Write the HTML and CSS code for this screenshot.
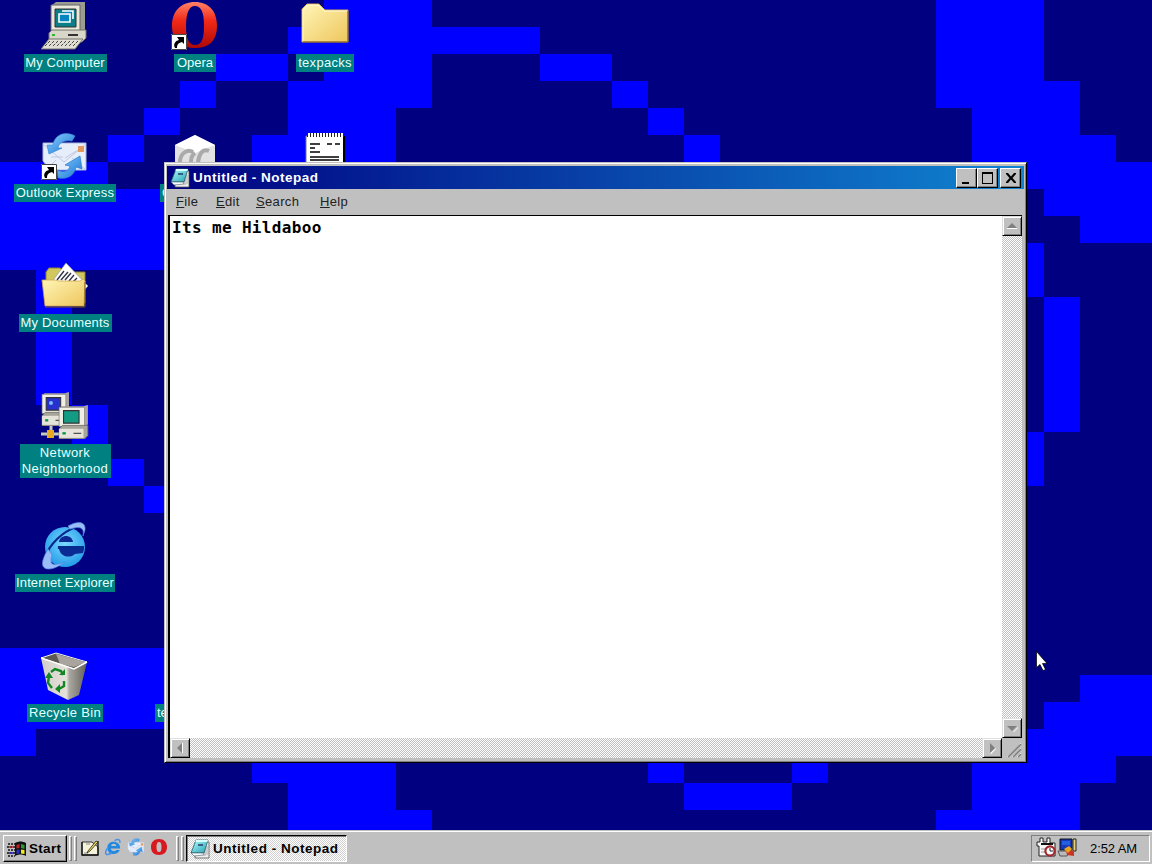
FILE: index.html
```html
<!DOCTYPE html>
<html lang="en">
<head>
<meta charset="utf-8">
<title>Desktop</title>
<link rel="stylesheet" href="styles.css">
</head>
<body>
<svg width="0" height="0" class="defs">
  <defs>
    <linearGradient id="folder" x1="0" y1="0" x2="1" y2="1"><stop offset="0" stop-color="#fff6b8"/><stop offset="1" stop-color="#eec65c"/></linearGradient>
    <linearGradient id="red" x1="0" y1="0" x2="0" y2="1"><stop offset="0" stop-color="#ff8268"/><stop offset=".4" stop-color="#f22a18"/><stop offset="1" stop-color="#ae0804"/></linearGradient>
    <linearGradient id="sky" x1="0" y1="0" x2="1" y2="1"><stop offset="0" stop-color="#8bd0fc"/><stop offset="1" stop-color="#1672d4"/></linearGradient>
    <radialGradient id="ball" cx=".5" cy=".4" r=".6"><stop offset="0" stop-color="#7cd8ff"/><stop offset="1" stop-color="#249ce8"/></radialGradient>
    <linearGradient id="bin" x1="0" y1="0" x2="1" y2="0"><stop offset="0" stop-color="#d0cec6"/><stop offset=".55" stop-color="#e5e2dc"/><stop offset=".62" stop-color="#a9a69f"/><stop offset="1" stop-color="#625f58"/></linearGradient>
    <linearGradient id="teal" x1="0" y1="0" x2="1" y2="1"><stop offset="0" stop-color="#b8ffff"/><stop offset="1" stop-color="#20a0b0"/></linearGradient>
    <symbol id="shortcut" viewBox="0 0 16 16"><path d="M0 0h16v16H0z" fill="#fff"/><path d="M.5.5h15v15H.5z" fill="none" stroke="#444"/><path d="M4 14c-2-4 0-7 4-8L6 3h7v7l-2-2c-4 1-5 3-5 6z" fill="#000"/></symbol>
    <symbol id="note" viewBox="0 0 20 20"><path d="M15 2l4 1v16H5v-3z" fill="#eee" stroke="#555" stroke-width=".8"/><path d="M17 7v9m-2-6v7" stroke="#aaa"/><path d="M6 1h12l-4 13H1z" fill="url(#teal)" stroke="#245764" stroke-width=".8"/><path d="M6 1h12l-.6 2h-12z" fill="#d8ffff"/><path d="M8 6h5" stroke="#125" stroke-width="1.3"/><path d="M1 14h12l1 2-10 1z" fill="#f8ffff" stroke="#456" stroke-width=".6"/></symbol>
    <symbol id="ie" viewBox="0 0 48 48"><ellipse cx="24" cy="25" rx="20" ry="20" fill="url(#ball)"/><path d="M18 20c1-8 13-8 14 0zM18 27h25l-1 4-8 1c-4 4-14 4-16-5z" fill="#0b2a94"/><path d="M43 26H18v-1h25M4 35C9 22 21 10 35 5" fill="none" stroke="#062a8e" stroke-width="2.200"/><path d="M27 4c11-6 18-4 17 4l-2 6c2-9-4-10-13-7M7 27C0 39-1 47 8 47c5 0 10-3 16-7-8 3-14 4-14-1 0-2 0-4 1-6z" fill="#9bbdf7" stroke="#5387e2" stroke-width=".7"/></symbol>
    <symbol id="mail" viewBox="0 0 48 48"><path d="M2 11h43v27H9L2 29z" fill="#e6eefb" stroke="#a6b9e2"/><path d="M2 12l21 18 22-18M15 28L6 37m25-11 13 11M24 26l13-8M10 25h12" fill="none" stroke="#c2c8de" stroke-width="1"/><path d="M37 14h6v6h-6z" fill="#e3985c"/><path d="M34 4C23-2 13 4 12 13H6l2 9 13-6h-4c1-6 7-8 14-7z" fill="url(#sky)" stroke="#3a8bdc" stroke-width=".7"/><path d="M17 46c11 2 17-4 18-11l6 2-2-13-15 9 5 1c-1 5-6 7-13 4z" fill="url(#sky)" stroke="#2678d2" stroke-width=".7"/></symbol>
    <symbol id="pc" viewBox="2 0 28 30" preserveAspectRatio="none"><path d="M5 1h20l4-1v17l-3 3H5z" fill="#aaa69d"/><path d="M3 2h23v17H3z" fill="#f1eee5" stroke="#777" stroke-width=".6"/><path d="M7 5h14v11H7z" fill="currentColor" stroke="#333"/><path d="M3 21l3-3h23v9l-3 3H3z" fill="#a8a59b" stroke="#67655f" stroke-width=".7"/><path d="M3 21h22v8H3z" fill="#e6e3da"/><path d="M6 25h3" stroke="#00943b" stroke-width="2"/><path d="M16 25h7" stroke="#444"/></symbol>
  </defs>
</svg>

<main class="desktop">
  <svg class="wallpaper" viewBox="0 0 32 32" preserveAspectRatio="none" shape-rendering="crispEdges">
    <path fill="#0000fe" d="M9 0h3v1h3v1h-3v2h-1v2H7V5h1V3h1V2H8V1h1zM6 2h2v1H6zM5 3h1v1H5zM4 4h1v1H4zM3 5h1v1H3zM0 6h3v1h5v3H0zM15 2h2v1h-2zM17 3h1v1h-1zM18 4h1v1h-1zM19 5h1v1h-1zM26 0h3v3h1v2h1v1h1v3h-2V8h-1V7h-2V4h-1zM28 9h1v2h-1zM29 11h1v5h-1zM28 16h1v2h-1zM1 10h1v5H1zM2 15h1v2H2zM3 17h1v1H3zM4 18h1v1H4zM0 24h5v3H1v1H0zM7 28h4v2h1v2H8v-3H7zM18 28h1v1h-1zM22 28h1v1h-1zM19 29h3v1h-3zM30 25h2v3h-1v1h-1v3h-4v-2h1v-2h1v-1h1v-1h1z"/>
  </svg>

  <div class="icons">
    <div class="item">
      <svg class="icon" viewBox="0 0 48 48"><path d="M11 3l4-3h29v28l-4 5H11z" fill="#9b9b91"/><path d="M10 3h29v27H10z" fill="#ebe9dc" stroke="#666"/><path d="M14 7h21v18H14z" fill="#0b7f88" stroke="#333"/><path d="M18 12h11v8H18zM21 9h11v8" fill="#0785c0" stroke="#fff" stroke-width="1.6"/><path d="M8 31l3-3h34v8l-4 4H8z" fill="#d8d5c9" stroke="#77746c"/><path d="M11 33h3" stroke="#0a0" stroke-width="1.5"/><path d="M27 33h10" stroke="#333" stroke-width="2"/><path d="M8 37h34l-8 10H0z" fill="#e1ded3" stroke="#77746c"/><path d="M9 39l-5 5m9-5-5 5m9-5-5 5m9-5-5 5m9-5-5 5m9-5-5 5m9-5-5 5m9-5-5 5" stroke="#444" stroke-dasharray="3 1"/></svg>
      <span class="label w83">My Computer</span>
    </div>
    <div class="item">
      <svg class="icon" viewBox="0 0 48 48"><path d="M24 0C10 0 1 9 1 24s9 22 23 22 22-7 22-22S38 0 24 0zm0 4c6 0 9 6 9 20s-3 19-9 19-9-6-9-19 3-20 9-20z" fill="url(#red)" fill-rule="evenodd"/><use href="#shortcut" y="32" width="16" height="16"/></svg>
      <span class="label w42">Opera</span>
    </div>
    <div class="item">
      <svg class="icon" viewBox="0 0 48 48"><path d="M1 7l5-5h12l6 6h23v32H1z" fill="url(#folder)" stroke="#d1ad58"/><path d="M2 39V8l5-5h10l6 6h23" fill="none" stroke="#fffbd5"/><path d="M2 40h45V9" fill="none" stroke="#735315"/></svg>
      <span class="label w58">texpacks</span>
    </div>
    <div class="item">
      <svg class="icon"><use href="#mail"/><use href="#shortcut" y="32" width="16" height="16"/></svg>
      <span class="label w102">Outlook Express</span>
    </div>
    <div class="item">
      <svg class="icon" viewBox="0 0 48 48"><path d="M4 13L24 3l20 10v26L24 47 4 39z" fill="#e2e2e2"/><path d="M4 13L24 3l20 10-20 8z" fill="#fff"/><path d="M22 20c-7-4-13 3-13 10m29-11c-7-3-10 4-11 11m-3-9c-3 2-4 6-4 9" fill="none" stroke="#aaa" stroke-width="4"/></svg>
      <span class="label tucked w70">C</span>
    </div>
    <div class="item">
      <svg class="icon" viewBox="0 0 48 48"><path d="M5 4h38v44H5z" fill="#fff" stroke="#777"/><path d="M43 4v44" stroke="#000" stroke-width="2"/><path d="M6 3h37" stroke="#fff" stroke-width="4"/><path d="M6 3h37" stroke="#222" stroke-width="4" stroke-dasharray="1 2"/><path d="M9 12h10m7 0h5m3 0h5M9 16h5m-5 4h10M9 25h29M9 28h29" stroke="#000" stroke-width="1.3"/></svg>
    </div>
    <div class="item">
      <svg class="icon" viewBox="0 0 48 48"><path d="M5 10l3-4h11l4 4h21v31H5z" fill="#d0c85f" stroke="#8e8232"/><path d="M10 21L25 1l22 23-11 12z" fill="#fff" stroke="#999" stroke-width=".7"/><path d="M16 18l7-9m-3 9 7-8m-3 8 6-7m-2 8 5-6m-1 7 4-4" stroke="#334" stroke-width="1.400"/><path d="M1 18h13l4 1h21l3-2 2 2-1 25H4z" fill="url(#folder)" stroke="#d1a64f" stroke-width=".8"/><path d="M4 45h40V20" fill="none" stroke="#795619"/></svg>
      <span class="label w93">My Documents</span>
    </div>
    <div class="item blank"></div>
    <div class="item blank"></div>
    <div class="item">
      <svg class="icon" viewBox="0 0 48 48"><use href="#pc" x="0" y="0" width="29" height="34" color="#2631ce"/><path d="M10 34v8M0 42h19" stroke="#c9c9c0" stroke-width="3"/><path d="M6 38h7v8H6z" fill="#e8ab20"/><use href="#pc" x="17" y="13" width="31" height="34" color="#149b83"/><circle cx="10" cy="11" r="2" fill="#7ab9ff"/></svg>
      <span class="label w91">Network<br>Neighborhood</span>
    </div>
    <div class="item blank"></div>
    <div class="item blank"></div>
    <div class="item">
      <svg class="icon"><use href="#ie"/></svg>
      <span class="label w100">Internet Explorer</span>
    </div>
    <div class="item blank"></div>
    <div class="item blank"></div>
    <div class="item">
      <svg class="icon" viewBox="0 0 48 48"><path d="M0 6l15-5 31 9-13 7z" fill="#5e5955" stroke="#f4f4ec"/><path d="M15 2l4 10 14 3 12-5z" fill="#a9a49e"/><path d="M0 6l33 11 13-7-8 33-11 5-20-10z" fill="url(#bin)"/><path d="M0 6l33 11 13-7" fill="none" stroke="#fff" stroke-width="1.5"/><path d="M10 20l4-3 6 2 2 4M8 24l-1 7 4 5m7 1 5-3v-5" fill="none" stroke="#138525" stroke-width="2.400"/><path d="M18 23h6v-6zM4 26l4-6 4 6zM19 32v9l-5-4z" fill="#138525"/></svg>
      <span class="label w76">Recycle Bin</span>
    </div>
    <div class="item">
      <span class="icon"></span>
      <span class="label tucked w80">te</span>
    </div>
  </div>

  <section class="window">
    <header class="titlebar">
      <svg class="small-icon"><use href="#note"/></svg>
      <h1>Untitled - Notepad</h1>
      <div class="controls">
        <button aria-label="Minimize"><svg viewBox="0 0 16 16"><path d="M3 12h7v2H3z"/></svg></button>
        <button aria-label="Maximize"><svg viewBox="0 0 16 16"><path d="M2 2h11v12H2zm1 2v9h9V4z" fill-rule="evenodd"/></svg></button>
        <button class="close" aria-label="Close"><svg viewBox="0 0 16 16"><path d="M3 3h2l3 3.500L11 3h2v1L9.500 8l3.500 4v1h-2L8 9.500 5 13H3v-1l3.500-4L3 4z"/></svg></button>
      </div>
    </header>
    <nav class="menubar"><span class="m-file"><u>F</u>ile</span><span class="m-edit"><u>E</u>dit</span><span class="m-search"><u>S</u>earch</span><span><u>H</u>elp</span></nav>
    <div class="editor">
      <div class="text">Its me Hildaboo</div>
      <div class="scroll vertical">
        <button aria-label="Up"><svg viewBox="0 0 16 16"><path d="M3 10h10v1H3z" fill="#fff"/><path d="M8 5l5 5H3z"/></svg></button>
        <button aria-label="Down"><svg viewBox="0 0 16 16"><path d="M9 12l5-5v1l-4 4z" fill="#fff"/><path d="M3 6h10l-5 5z"/></svg></button>
      </div>
      <div class="scroll horizontal">
        <button aria-label="Left"><svg viewBox="0 0 16 16"><path d="M10 3h1v10h-1z" fill="#fff"/><path d="M10 3v10L5 8z"/></svg></button>
        <button aria-label="Right"><svg viewBox="0 0 16 16"><path d="M6 13l6-5v1l-5 5z" fill="#fff"/><path d="M6 3v10l5-5z"/></svg></button>
      </div>
      <svg class="grip" viewBox="0 0 20 20"><path d="M5 19L19 5m-9 14 9-9m-4 9 4-4" stroke="#fff"/><path d="M6 19L19 6m-8 13 8-8m-3 8 3-3" stroke="#808080" stroke-width="1.700"/></svg>
    </div>
  </section>

  <svg class="cursor" viewBox="0 0 12 20"><path d="M.5.5v16l3.500-3 3 6 2.500-1-3-6H11z" fill="#fff" stroke="#000" stroke-width=".7"/></svg>
</main>

<footer class="taskbar">
  <button class="start">
    <svg viewBox="0 0 20 16"><path d="M1 3h7M0 6h8M1 9h7M0 12h8M1 15h7" stroke="#111" stroke-width="1.500" stroke-dasharray="2 1"/><path d="M2 6h5" stroke="#b22" stroke-width="1.600" stroke-dasharray="2 1"/><path d="M2 12h5" stroke="#22b" stroke-width="1.600" stroke-dasharray="2 1"/><path d="M8 2c4-2 7-2 11 0v13c-4-2-7-2-11 0z" fill="#111"/><path d="M9.500 4l3-1v4l-3 .5z" fill="#c42222"/><path d="M14 3l3.500 1v4L14 7z" fill="#2b9a35"/><path d="M9.500 9l3-.5v4l-3 .5z" fill="#2830c5"/><path d="M14 8.500l3.500.5v4l-3.500-.5z" fill="#f0ec20"/></svg>
    <span>Start</span>
  </button>
  <i class="groove g1"></i><i class="groove"></i>
  <div class="quick">
    <svg viewBox="0 0 18 18"><path d="M1 4h10l6 5v8H1z" fill="#f4f2d8" stroke="#333"/><path d="M1 4v13h16V3" fill="none" stroke="#111" stroke-width="1.300"/><path d="M3 15h4m2-9H5" stroke="#888"/><path d="M7 13L15 3l2 1-8 9-3 2z" fill="#f1d954" stroke="#222" stroke-width=".8"/></svg>
    <svg viewBox="0 0 48 48"><path d="M43 28H18c1 8 12 9 15 4h9C37 47 9 48 9 25 9 5 44 4 43 28zM19 21h14c-1-8-13-8-14 0z" fill="#2389df" fill-rule="evenodd"/><path d="M28 7c10-5 16-3 14 6M9 27C0 42 4 49 21 40" fill="none" stroke="#4c91e8" stroke-width="4"/></svg>
    <svg viewBox="0 0 48 48"><use href="#mail"/></svg>
    <svg viewBox="0 0 18 18"><path d="M9 1C4 1 1 4 1 9s3 8 8 8 8-3 8-8-3-8-8-8zm0 3c2 0 2.500 2 2.500 5s-.5 5-2.500 5-2.500-2-2.500-5 .5-5 2.500-5z" fill="#d91920" fill-rule="evenodd"/></svg>
  </div>
  <i class="groove"></i><i class="groove"></i>
  <button class="task"><svg class="small-icon"><use href="#note"/></svg><span>Untitled - Notepad</span></button>
  <div class="tray">
    <svg viewBox="0 0 20 20"><path d="M1 5h3V1h3v4h4V1h3v5h5v13H3V9H1z" fill="#f7f7f5" stroke="#222"/><path d="M5 7h12" stroke="#111" stroke-width="2"/><path d="M5 12h5m-5 3h4" stroke="#999"/><circle cx="14" cy="14" r="4.600" fill="#fff" stroke="#a1262d" stroke-width="2.200"/><path d="M14 11v3h3" stroke="#222" fill="none"/></svg>
    <svg viewBox="0 0 20 20"><path d="M3 2h12v11H3z" fill="#1638bc" stroke="#111"/><path d="M5 4h8v4H5z" fill="#235fe0"/><path d="M16 2h3v12h-3z" fill="#e5d37b" stroke="#222"/><path d="M1 14h12l-3 5H3z" fill="#bbb" stroke="#555"/><path d="M9 14l3-3 5 4v4l-7-1z" fill="#cb3423"/><path d="M7 12l5-3 3 3-4 4z" fill="#e6a51f"/></svg>
    <time>2:52 AM</time>
  </div>
</footer>
</body>
</html>
```
FILE: styles.css
```css
* { box-sizing: border-box; }
html, body { height: 100%; }
body {
  margin: 0;
  display: flex;
  flex-direction: column;
  overflow: hidden;
  background: #000080;
  font: 13px/16px "Liberation Sans", Arial, sans-serif;
  color: #000;
}
svg { display: block; flex: none; }
button { font: inherit; padding: 0; border: 0; border-radius: 0; color: #000; }
.defs { position: absolute; }

.desktop { position: relative; flex: 1; overflow: hidden; background: #000080; }
.wallpaper { position: absolute; left: 0; top: 0; width: 1152px; height: 864px; }

.icons {
  position: relative;
  display: grid;
  grid-template-columns: repeat(3, 130px);
  grid-auto-rows: 130px;
  padding-top: 2px;
}
.item { display: flex; flex-direction: column; align-items: center; gap: 4px; }
.icon { width: 48px; height: 48px; flex: none; }
.label {
  padding: 1px 0;
  background: #008080;
  color: #e8ffff;
  text-align: center;
  white-space: nowrap;
}
.label.tucked { text-align: left; padding-left: 2px; }
.w42 { width: 42px; }
.w58 { width: 58px; letter-spacing: .3px; }
.w70 { width: 70px; }
.w76 { width: 76px; letter-spacing: .3px; }
.w80 { width: 80px; }
.w83 { width: 83px; letter-spacing: .15px; }
.w91 { width: 91px; letter-spacing: .4px; }
.w93 { width: 93px; letter-spacing: .2px; }
.w100 { width: 100px; letter-spacing: .1px; }
.w102 { width: 102px; letter-spacing: .2px; }

.window {
  position: absolute;
  left: 164px;
  top: 162px;
  width: 863px;
  height: 601px;
  padding: 2px;
  display: flex;
  flex-direction: column;
  background: #c0c0c0;
  border: 1px solid;
  border-color: #c0c0c0 #000 #000 #c0c0c0;
  box-shadow: inset 1px 1px #fff, inset -1px -1px #808080;
}
.titlebar {
  height: 23px;
  margin-top: 1px;
  padding: 0 3px 0 3px;
  display: flex;
  align-items: center;
  background: linear-gradient(90deg, #000080, #1084d0);
  color: #fff;
}
.small-icon { width: 20px; height: 20px; }
.titlebar h1 { flex: 1; margin: 0 0 0 3px; font-size: 13.5px; line-height: 20px; letter-spacing: .52px; }
.controls { display: flex; }
.controls button, .scroll button {
  width: 20px;
  height: 20px;
  display: flex;
  align-items: center;
  justify-content: center;
  background: #c0c0c0;
  border: 1px solid;
  border-color: #fff #000 #000 #fff;
  box-shadow: inset -1px -1px #808080;
}
.controls button { width: 21px; }
.controls .close { margin-left: 2px; }
.controls svg, .scroll svg { width: 16px; height: 16px; }
.scroll svg { fill: #808080; }
.scroll button { border-color: #dfdfdf #000 #000 #dfdfdf; box-shadow: inset 1px 1px #fff, inset -1px -1px #808080; }

.menubar { height: 26px; display: flex; padding: 5px 0 0 9px; letter-spacing: .35px; color: #222; }
.menubar span { line-height: 16px; }
.m-file { width: 40px; }
.m-edit { width: 40px; }
.m-search { width: 64px; }

.editor {
  flex: 1;
  margin: 0 2px 2px 1px;
  display: grid;
  grid-template-columns: 1fr 20px;
  grid-template-rows: 1fr 20px;
  background: #fff;
  border-top: 1px solid #000;
  border-left: 2px solid #000;
}
.text { padding: 3px 2px; font: bold 16px/18px "DejaVu Sans Mono", monospace; letter-spacing: .35px; }
.scroll {
  display: flex;
  justify-content: space-between;
  background: repeating-conic-gradient(#c0c0c0 0 25%, #fff 0 50%) 0 0 / 2px 2px;
}
.vertical { flex-direction: column; }
.grip { width: 20px; height: 20px; background: #c0c0c0; }
.cursor { position: absolute; left: 1036px; top: 651px; width: 12px; height: 20px; }

.taskbar {
  position: relative;
  height: 34px;
  flex: none;
  display: flex;
  align-items: center;
  padding: 3px 2px 1px 3px;
  background: #c0c0c0;
  border-top: 1px solid #c0c0c0;
  box-shadow: inset 0 1px #fff;
}
.start {
  width: 64px;
  height: 27px;
  display: flex;
  align-items: center;
  gap: 2px;
  padding-left: 3px;
  background: #c0c0c0;
  border: 1px solid;
  border-color: #fff #000 #000 #fff;
  box-shadow: inset -1px -1px #808080;
  font-weight: bold;
  font-size: 13.5px;
  letter-spacing: .3px;
}
.start svg { width: 20px; height: 16px; }
.groove { width: 3px; height: 25px; margin-right: 2px; border: 1px solid; border-color: #fff #808080 #808080 #fff; }
.g1 { margin-left: 2px; }
.quick { display: flex; gap: 5px; width: 97px; padding-left: 2px; }
.quick svg { width: 18px; height: 18px; margin-bottom: 4px; }
.task {
  width: 161px;
  height: 27px;
  display: flex;
  align-items: center;
  gap: 3px;
  padding-left: 3px;
  background: repeating-conic-gradient(#d0d0d0 0 25%, #fff 0 50%) 0 0 / 2px 2px;
  border: 1px solid;
  border-color: #000 #fff #fff #000;
  box-shadow: inset 1px 1px #808080;
  font-weight: bold;
  font-size: 13.5px;
  letter-spacing: .52px;
  white-space: nowrap;
}
.tray {
  width: 119px;
  height: 27px;
  margin-left: auto;
  display: flex;
  align-items: center;
  gap: 1px;
  padding-left: 4px;
  border: 1px solid;
  border-color: #808080 #fff #fff #808080;
}
.tray svg { width: 20px; height: 20px; margin-bottom: 3px; }
.tray time { margin-left: 12px; letter-spacing: -.1px; }
```
